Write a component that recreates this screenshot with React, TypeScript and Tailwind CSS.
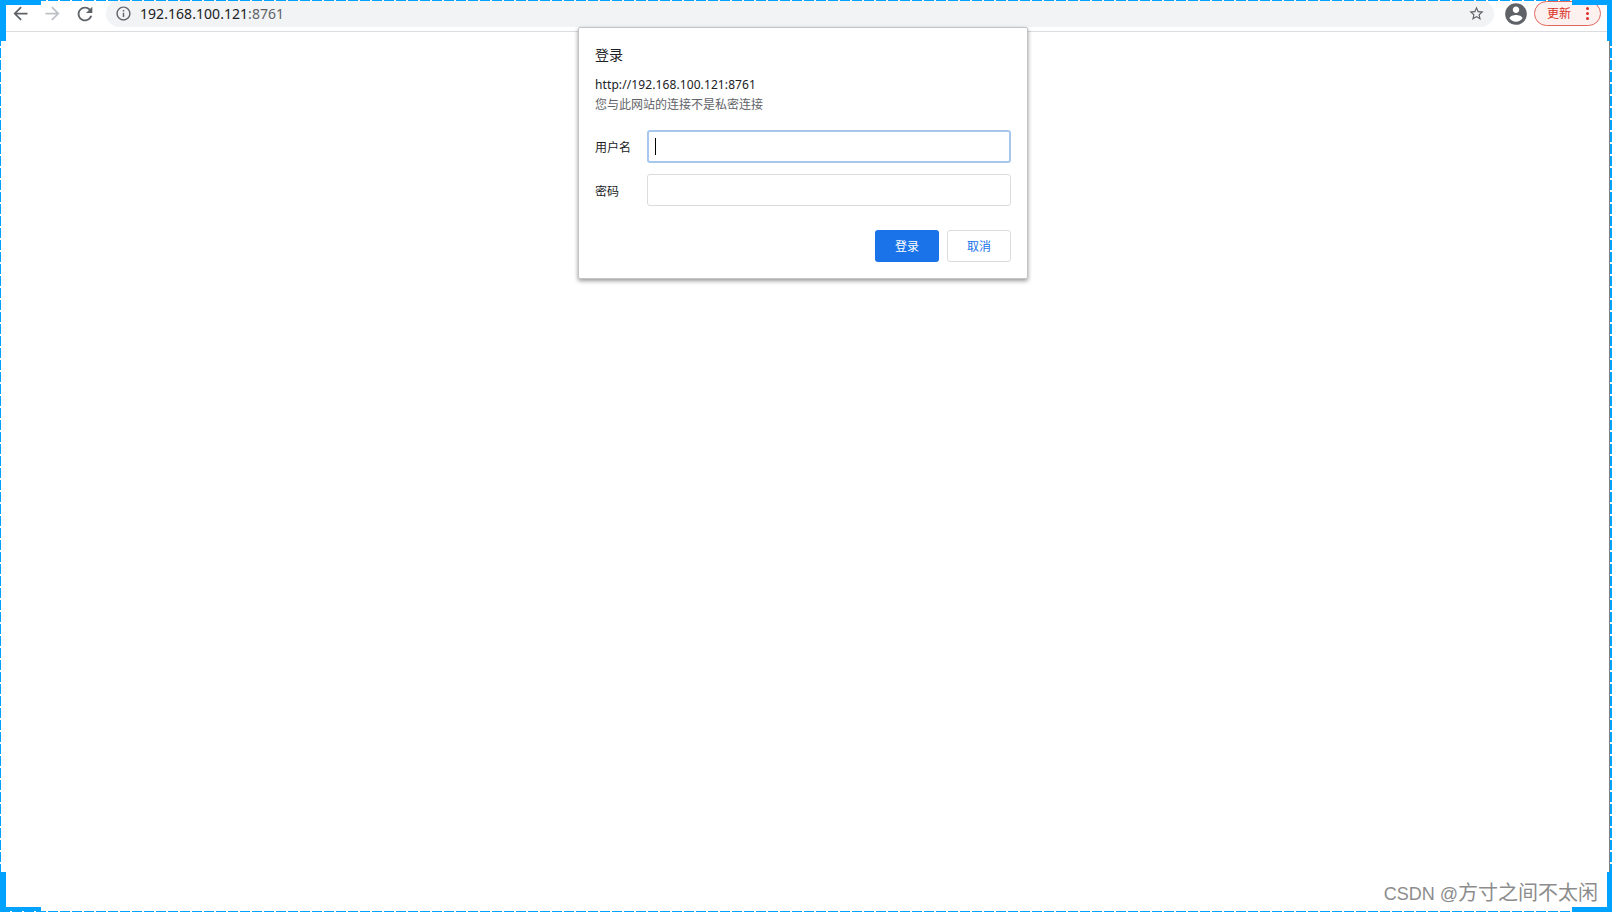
const sans = "font-['Noto_Sans','Noto_Sans_CJK_SC',sans-serif]"

const dashH = "bg-[repeating-linear-gradient(90deg,#00a2ff_0_10px,transparent_10px_12px)]"
const dashV = "bg-[repeating-linear-gradient(180deg,#00a2ff_0_10px,transparent_10px_12px)]"

function Corner({ className }: { className: string }) {
  return <div className={`absolute bg-[#00a2ff] ${className}`} />
}

function Icon({ d, className }: { d: string; className: string }) {
  return (
    <svg viewBox="0 0 24 24" className={className}>
      <path d={d} />
    </svg>
  )
}

function Field({ label, focused }: { label: string; focused?: boolean }) {
  return (
    <div className={focused ? "flex items-center h-[33px]" : "flex items-center h-[32px]"}>
      <span className="w-[52px] pt-[3px] text-[12px] text-[#202124]">{label}</span>
      <div
        className={
          focused
            ? "flex-1 h-[33px] rounded-[3px] border-2 border-[#a8c7ec] flex items-center pl-[6px]"
            : "flex-1 h-[32px] rounded-[3px] border border-[#dadce0]"
        }
      >
        {focused && <div className="w-px h-[17px] bg-black" />}
      </div>
    </div>
  )
}

export default function App() {
  return (
    <div className={`relative w-[1612px] h-[912px] bg-white overflow-hidden ${sans}`}>
      <div className="h-[32px] border-b border-[#dadce0]">
        <div className="flex items-center h-[27px]">
          <div className="flex items-center w-[106px] pl-[10px] gap-[11px]">
            <Icon
              className="w-[21px] h-[21px] fill-[#5f6368]"
              d="M20 11H7.83l5.59-5.59L12 4l-8 8 8 8 1.41-1.41L7.83 13H20v-2z"
            />
            <Icon
              className="w-[21px] h-[21px] fill-[#bdc1c6]"
              d="M12 4l-1.41 1.41L16.17 11H4v2h12.17l-5.58 5.59L12 20l8-8z"
            />
            <Icon
              className="w-[22px] h-[22px] fill-[#5f6368]"
              d="M17.65 6.35C16.2 4.9 14.21 4 12 4c-4.42 0-7.99 3.58-7.99 8s3.57 8 7.99 8c3.73 0 6.84-2.55 7.73-6h-2.08c-.82 2.33-3.04 4-5.65 4-3.31 0-6-2.69-6-6s2.69-6 6-6c1.66 0 3.14.69 4.22 1.78L13 11h7V4l-2.35 2.35z"
            />
          </div>
          <div className="flex items-center w-[1388px] h-[27px] rounded-[14px] bg-[#f1f3f4] pl-[9px] pr-[9px]">
            <Icon
              className="w-[17px] h-[17px] fill-[#5f6368]"
              d="M11 7h2v2h-2zm0 4h2v6h-2zm1-9C6.48 2 2 6.48 2 12s4.48 10 10 10 10-4.48 10-10S17.52 2 12 2zm0 18c-4.41 0-8-3.59-8-8s3.59-8 8-8 8 3.59 8 8-3.59 8-8 8z"
            />
            <span className="ml-[8px] text-[14px] text-[#202124] tracking-[0.05px]">
              192.168.100.121<span className="text-[#5f6368]">:8761</span>
            </span>
            <Icon
              className="ml-auto w-[17px] h-[17px] fill-[#5f6368]"
              d="M22 9.24l-7.19-.62L12 2 9.19 8.63 2 9.24l5.46 4.73L5.82 21 12 17.27 18.18 21l-1.63-7.03L22 9.24zM12 15.4l-3.76 2.27 1-4.28-3.32-2.88 4.38-.38L12 6.1l1.71 4.04 4.38.38-3.32 2.88 1 4.28L12 15.4z"
            />
          </div>
          <Icon
            className="w-[26px] h-[26px] ml-[9px] fill-[#5f6368]"
            d="M12 2C6.48 2 2 6.48 2 12s4.48 10 10 10 10-4.48 10-10S17.52 2 12 2zm0 3c1.66 0 3 1.34 3 3s-1.34 3-3 3-3-1.34-3-3 1.34-3 3-3zm0 14.2c-2.5 0-4.71-1.28-6-3.22.03-1.99 4-3.08 6-3.08 1.99 0 5.97 1.09 6 3.08-1.29 1.94-3.5 3.22-6 3.22z"
          />
          <div className="flex items-center justify-between w-[67px] h-[25px] ml-[5px] rounded-full border border-[#e0685e] bg-[#fdf1ef] pl-[12px] pr-[11px] text-[12px] text-[#d93025]">
            <span>更新</span>
            <span className="flex flex-col gap-[2px]">
              <i className="block w-[3px] h-[3px] rounded-full bg-[#d93025]" />
              <i className="block w-[3px] h-[3px] rounded-full bg-[#d93025]" />
              <i className="block w-[3px] h-[3px] rounded-full bg-[#d93025]" />
            </span>
          </div>
        </div>
      </div>

      {/* login dialog */}
      <div className="absolute left-[578px] top-[27px] w-[450px] h-[252px] bg-white border border-[#c4c4c4] rounded-[2px] shadow-[0_2px_4px_rgba(0,0,0,0.4)] px-[16px] pt-[17px]">
        <div className="text-[14px] leading-[20px] text-[#202124]">登录</div>
        <div className="mt-[10px] text-[12px] leading-[20px] text-[#202124] tracking-[0.1px]">http://192.168.100.121:8761</div>
        <div className="text-[12px] leading-[20px] text-[#5f6368]">您与此网站的连接不是私密连接</div>
        <div className="mt-[15px] flex flex-col gap-[11px]">
          <Field label="用户名" focused />
          <Field label="密码" />
        </div>
        <div className="mt-[24px] flex justify-end gap-[8px] text-[12px]">
          <button className="w-[64px] h-[32px] pt-[2px] rounded-[3px] bg-[#1a73e8] text-white">登录</button>
          <button className="w-[64px] h-[32px] pt-[2px] rounded-[3px] border border-[#dadce0] text-[#1a73e8]">取消</button>
        </div>
      </div>

      <div className="absolute right-[14px] bottom-[6px] font-['Liberation_Sans','Noto_Sans_CJK_SC',sans-serif] text-[20px] leading-[24px] text-[#8c8c8c]">
        <span className="text-[18px]">CSDN @</span>方寸之间不太闲
      </div>

      {/* selection frame */}
      <div className={`absolute left-0 right-0 top-0 h-[1px] ${dashH}`} />
      <div className={`absolute left-0 right-0 bottom-0 h-[1px] ${dashH}`} />
      <div className={`absolute left-0 top-0 bottom-0 w-[1px] ${dashV}`} />
      <div className="absolute right-[2px] top-0 bottom-0 w-[1px] bg-[#808080]" />
      <div className={`absolute right-0 top-0 bottom-0 w-[2px] ${dashV}`} />
      <Corner className="left-0 top-0 w-[41px] h-[5px]" />
      <Corner className="left-0 top-0 w-[6px] h-[41px]" />
      <Corner className="right-0 top-0 w-[40px] h-[5px]" />
      <Corner className="right-0 top-0 w-[5px] h-[41px]" />
      <Corner className="left-0 bottom-[1px] w-[41px] h-[4px]" />
      <Corner className="left-0 bottom-0 w-[6px] h-[40px]" />
      <Corner className="right-0 bottom-0 w-[40px] h-[5px]" />
      <Corner className="right-0 bottom-0 w-[5px] h-[40px]" />
    </div>
  )
}
